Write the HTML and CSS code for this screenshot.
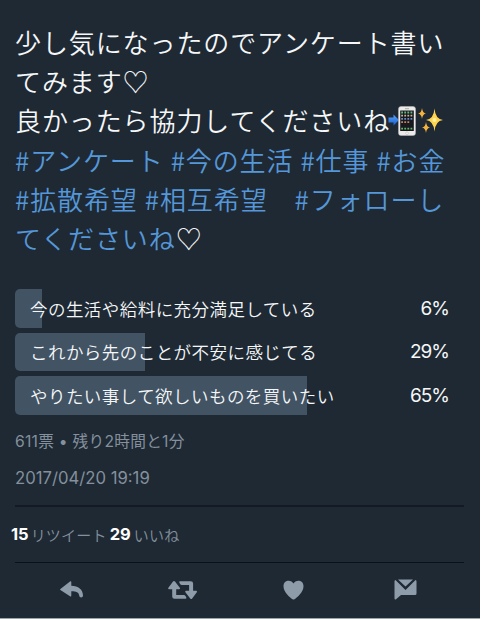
FILE: index.html
```html
<!DOCTYPE html>
<html lang="ja">
<head>
    <meta charset="UTF-8">
    <meta name="viewport" content="width=device-width, initial-scale=1.0">
    <title>アンケート</title>
    <link rel="stylesheet" href="styles.css">
</head>
<body>

    <main class="tweet">
        <div class="text">
            <div class="line">少し気になったのでアンケート書い</div>
            <div class="line">てみます<span class="heart">♡</span></div>
            <div class="line">良かったら協力してくださいね<svg class="emoji" viewBox="0 0 56 32" width="56" height="32">
                    <defs>
                        <linearGradient id="arrow" x1="0" y1="0" x2="0" y2="1">
                            <stop offset="0" stop-color="#5ba4fa"/>
                            <stop offset="1" stop-color="#1760d2"/>
                        </linearGradient>
                    </defs>
                    <path fill="url(#arrow)" d="M.5 12.5h5V9.500l5.500 5.500-5.500 5.500v-3h-5z"/>
                    <rect x="10.500" y="1.500" width="17" height="29" rx="2.500" fill="#eceae9" stroke="#bab9b9" stroke-width=".5"/>
                    <rect x="12.200" y="5.500" width="13.600" height="20.500" fill="#17191f"/>
                    <path stroke="#62bc7c" stroke-width="1.800" stroke-dasharray="1.800 1.300" d="M13.200 7.500h11.500"/>
                    <path stroke="#c9b59a" stroke-width="1.800" stroke-dasharray="1.800 1.300" d="M13.200 10.700h11.500"/>
                    <path stroke="#6b8fc4" stroke-width="1.800" stroke-dasharray="1.800 1.300" d="M13.200 13.900h11.500"/>
                    <path stroke="#c98067" stroke-width="1.800" stroke-dasharray="1.800 1.300" d="M13.200 17.100h8"/>
                    <path stroke="#63b668" stroke-width="1.800" stroke-dasharray="1.800 1.300" d="M13.200 23.700h11.500"/>
                    <path stroke="#999" stroke-width=".8" d="M17 3.700h4"/>
                    <circle cx="19" cy="28.200" r="1.300" fill="#fff" stroke="#999" stroke-width=".4"/>
                    <path fill="#ffd34e" d="M46.500 3.500q.8 10.500 8.500 11.500-7.700 1-8.500 11.500-.8-10.500-8.500-11.500 7.700-1 8.500-11.500z"/>
                    <path fill="#f5b23c" d="M34 3q.6 5 4 5.500-3.400.5-4 5.500-.6-5-4-5.500 3.400-.5 4-5.500zM38 17q.6 5 4 5.500-3.400.5-4 5.500-.6-5-4-5.500 3.400-.5 4-5.500z"/>
                    <circle cx="46.500" cy="15" r="2" fill="#fff0a0"/>
                </svg></div>
            <div class="line tags"><span>#アンケート</span><span>#今の生活</span><span>#仕事</span><span>#お金</span></div>
            <div class="line tags"><span>#拡散希望</span><span class="wide">#相互希望</span><span>#フォローし</span></div>
            <div class="line"><span class="link">てくださいね</span><span class="heart">♡</span></div>
        </div>

        <div class="poll">
            <div class="option">
                <div class="bar" style="width: 6%"></div>
                <span class="label">今の生活や給料に充分満足している</span>
                <span class="percent">6%</span>
            </div>
            <div class="option">
                <div class="bar" style="width: 29%"></div>
                <span class="label">これから先のことが不安に感じてる</span>
                <span class="percent">29%</span>
            </div>
            <div class="option">
                <div class="bar" style="width: 65%"></div>
                <span class="label">やりたい事して欲しいものを買いたい</span>
                <span class="percent">65%</span>
            </div>
        </div>

        <div class="meta votes">611票 • 残り2時間と1分</div>
        <div class="meta date">2017/04/20 19:19</div>

        <div class="counts">
            <b>15</b><span class="retweets">リツイート</span><b>29</b><span class="likes">いいね</span>
        </div>

        <div class="actions">
            <svg viewBox="0 0 24 18" width="24" height="18">
                <path d="M.4 8 10 .5q1.300-.7 1.300.8v3.400c7 0 11.700 3.800 11.700 9.800 0 2.500-3.600 2.500-3.800 0-.3-3-3-4.200-7.900-4.200v4.200q0 1.500-1.300.8L.4 9q-.6-.5 0-1z"/>
            </svg>
            <svg viewBox="0 0 30 18" width="30" height="18">
                <path d="M6 0q.6 0 1 .6l4.800 6.200q.7 1.400-.8 1.400H8.200V14h7.500q1.300 0 1.800 1l.8 1.500q.4 1.200-.8 1.200H6.500q-2.300 0-2.300-2.300V8.200H1.200Q-.4 8.200.4 6.800L5 .6Q5.400 0 6 0z"/>
                <path d="M23.200 18q-.6 0-1-.6l-4.800-6.200q-.7-1.400.8-1.400h2.900V4h-7.200q-1.300 0-1.800-1l-.8-1.500q-.4-1.200.8-1.200h10.700q2.300 0 2.300 2.300v7.200H28q1.600 0 .8 1.400l-4.600 6.200q-.4.600-1 .6z"/>
            </svg>
            <svg viewBox="0 0 21 20" width="21" height="20">
                <path d="M10.500 3.500C12.300-.5 20.500-.8 20.500 6.300c0 6-6.400 11.300-9 12.900q-1 .6-2 0C6.900 17.600.5 12.300.5 6.300.5-.8 8.700-.5 10.500 3.500z"/>
            </svg>
            <svg viewBox="0 0 23 21" width="23" height="21">
                <path d="M4 .5h15L11.500 7.500z"/>
                <path d="M1.500 1 11.500 11 21.500 1q1 .2 1 1.200v12.300q0 1.500-1.500 1.500H7L2 20.300Q.5 21 .5 19.500V2.200q0-1 1-1.200z"/>
            </svg>
        </div>
    </main>

</body>
</html>
```
FILE: styles.css
```css
* {
    box-sizing: border-box;
}

body {
    margin: 0;
    background: #1e2934;
    color: #f5f7f8;
    font-family: Inter, "Noto Sans CJK JP", sans-serif;
}

.tweet {
    height: 619px;
    padding: 22px 16px 0 15px;
    border-bottom: 1px solid #9da4ab;
    overflow: hidden;
}

.text {
    font-family: "Noto Sans CJK JP", sans-serif;
    font-size: 26px;
    font-weight: 350;
    letter-spacing: 0.9px;
}

.line {
    display: flex;
    align-items: center;
    height: 39.2px;
    line-height: 39px;
    white-space: nowrap;
}

.emoji {
    margin: 2px 0 0 -2px;
}

.link,
.tags {
    color: #5597d8;
}

.tags {
    gap: 7px;
    letter-spacing: 0.9px;
}

.wide {
    margin-right: 20px;
}

.poll {
    display: grid;
    gap: 5px;
    margin-top: 32px;
}

.option {
    position: relative;
    display: flex;
    align-items: center;
    justify-content: space-between;
    height: 38.5px;
    padding: 0 15px;
    border-radius: 5px;
    overflow: hidden;
}

/* result bar behind the label */
.bar {
    position: absolute;
    top: 0;
    left: 0;
    height: 100%;
    background: #425364;
}

.label,
.percent {
    position: relative;
}

.label {
    font-family: "Noto Sans CJK JP", sans-serif;
    font-size: 17.5px;
    font-weight: 350;
    letter-spacing: 0.45px;
}

.percent {
    font-size: 19px;
    letter-spacing: -1px;
}

.meta {
    color: #84909c;
    line-height: 24px;
}

.votes {
    margin-top: 15px;
    font-size: 15.7px;
    letter-spacing: 0.25px;
}

.date {
    margin-top: 12px;
    font-size: 16.7px;
}

.counts {
    display: flex;
    align-items: center;
    height: 57px;
    margin-top: 15px;
    border-top: 2px solid #141a23;
    color: #84909c;
    font-size: 15px;
    font-weight: 350;
    letter-spacing: 0.2px;
}

.counts b {
    color: #fff;
    font-size: 16.5px;
    font-weight: 700;
    letter-spacing: 0;
}

.counts b:first-child {
    margin-left: -4px;
}

.retweets {
    margin: 0 3px 0 2px;
}

.likes {
    margin-left: 3px;
}

.actions {
    display: grid;
    grid-template-columns: repeat(4, 111.2px);
    place-items: center;
    height: 55px;
    padding-left: 1px;
    border-top: 1px solid #0c1017;
    fill: #8e9ba8;
}
```
